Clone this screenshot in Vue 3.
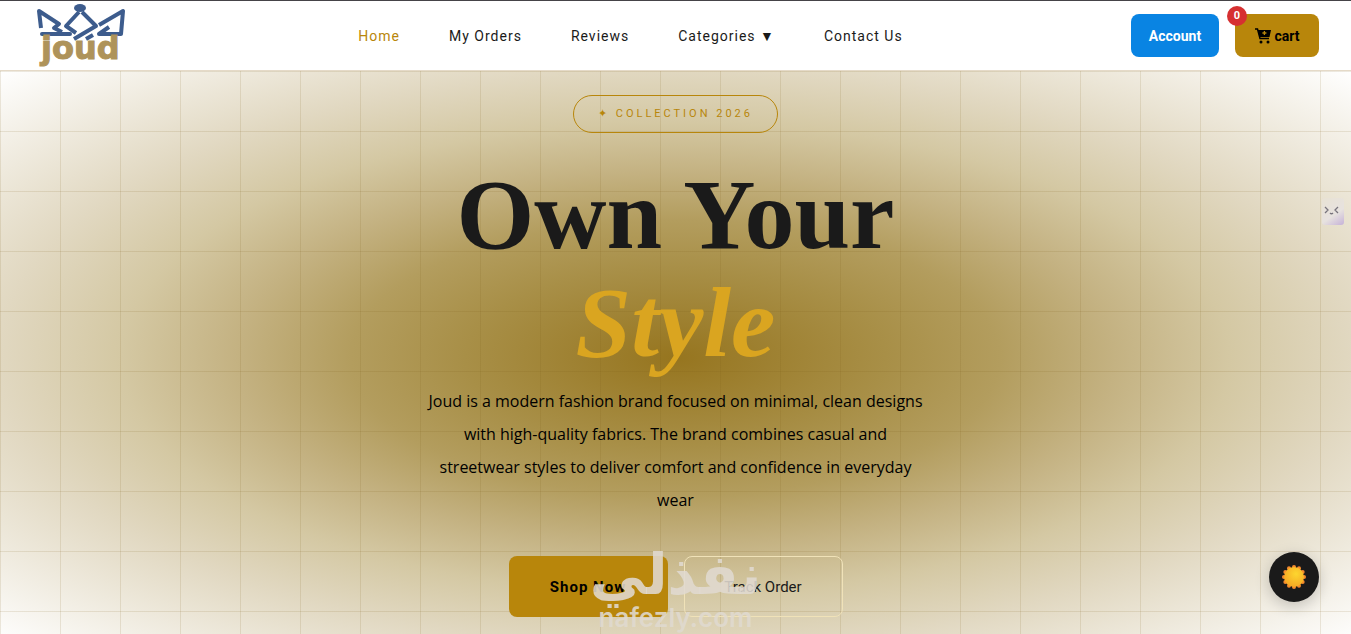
<script setup>
const links = ['Home', 'My Orders', 'Reviews', 'Categories ▼', 'Contact Us']
const petals = Array.from({ length: 12 }, (_, i) => {
  const a = (i * Math.PI) / 6
  return { x: 12 + 10 * Math.sin(a), y: 12 - 10 * Math.cos(a) }
})
</script>

<template>
  <div class="page">
    <header class="bar">
      <a class="logo" href="#" aria-label="Joud">
        <svg width="98" height="68" viewBox="0 0 98 68">
          <g fill="none" stroke="#3d5c8d" stroke-width="4" stroke-linejoin="round">
            <path d="M9 26 7 9l20 13-5 4 8 4" />
            <path d="M10 32h28" stroke-linecap="round" />
            <path d="M47 10 34 24l10 7M50 10l14 14-22 13" />
            <path d="M54 37l7-4M67 23 91 9l-2 23H67l10-7" />
          </g>
          <ellipse cx="48" cy="6" rx="6" ry="4" fill="#3d5c8d" />
          <text class="logo-word" x="9" y="57">joud</text>
        </svg>
      </a>
      <nav class="nav">
        <a v-for="(l, i) in links" :key="l" href="#" :class="{ active: i === 0 }">{{ l }}</a>
      </nav>
      <div class="actions">
        <button class="account" type="button">Account</button>
        <button class="cart" type="button">
          <svg width="16" height="16" viewBox="0 0 16 16" aria-hidden="true">
            <path d="M0 1h2.500L5 10.500h9" fill="none" stroke="#000" stroke-width="1.500" />
            <path d="M2.800 2H16l-1.500 7H4.600z" />
            <path d="M9.400 3v4M7.400 5h4" stroke="#b8860b" stroke-width="1.300" />
            <circle cx="6" cy="14" r="1.500" /><circle cx="13" cy="14" r="1.500" />
          </svg>
          cart
          <span class="badge">0</span>
        </button>
      </div>
    </header>

    <main class="hero">
      <span class="pill">✦ COLLECTION 2026</span>
      <h1>Own Your<em>Style</em></h1>
      <p>
        Joud is a modern fashion brand focused on minimal, clean designs with high-quality fabrics.
        The brand combines casual and streetwear styles to deliver comfort and confidence in everyday wear
      </p>
      <div class="cta">
        <button class="shop" type="button">Shop Now</button>
        <button class="track" type="button">Track Order</button>
        <div class="mark">
          <span class="mark-ar" lang="ar" dir="rtl">نفذلي</span>
          <span class="mark-en">nafezly.com</span>
        </div>
      </div>
    </main>

    <div class="helper">
      <svg width="22" height="27" viewBox="0 0 22 27" aria-hidden="true">
        <path d="M3 9l3 3-3 3M16 9l-3 3 3 3M8 15q1.500 1.500 3 0" fill="none" stroke="#77737c" stroke-width="1.300" />
      </svg>
    </div>
    <button class="theme" type="button" aria-label="Toggle theme">
      <svg width="24" height="24" viewBox="0 0 24 24">
        <defs>
          <radialGradient id="sun" cx="0.600" cy="0.350" r="0.700">
            <stop offset="0" stop-color="#fdd62f" />
            <stop offset="1" stop-color="#f5a623" />
          </radialGradient>
        </defs>
        <circle v-for="(p, i) in petals" :key="i" :cx="p.x" :cy="p.y" r="2" fill="#f58a2c" />
        <circle cx="12" cy="12" r="10" fill="url(#sun)" />
      </svg>
    </button>
  </div>
</template>

<style>
body { margin: 0; }
</style>

<style scoped>
* { box-sizing: border-box; }
.page {
  min-height: 100vh;
  display: flex;
  flex-direction: column;
  font-family: Roboto, "Noto Sans", sans-serif;
  color: #1a1a1a;
}
button { font-family: inherit; cursor: pointer; border: 0; border-radius: 8px; padding: 0; }
a { color: inherit; text-decoration: none; }
.bar {
  display: flex;
  align-items: center;
  justify-content: space-between;
  height: 71px;
  padding: 0 32px;
  background: #fff;
  border-top: 1px solid #454347;
  border-bottom: 1px solid #e5dac8;
}
.logo svg { display: block; }
.logo-word { font: bold 32px "DejaVu Sans", sans-serif; fill: #ae935a; stroke: #ae935a; stroke-width: 1px; }
.nav { display: flex; gap: 49px; font-size: 14px; letter-spacing: 1px; }
.nav .active { color: #b8860b; }
.actions { display: flex; gap: 16px; }
.actions button { height: 43px; font-size: 14px; font-weight: 700; }
.account { width: 88px; background: #0984e3; color: #fff; }
.cart {
  position: relative;
  width: 84px;
  display: flex;
  align-items: center;
  justify-content: center;
  gap: 4px;
  background: #b8860b;
  color: #000;
}
.badge {
  position: absolute;
  top: -8px;
  left: -8px;
  width: 20px;
  height: 20px;
  border-radius: 50%;
  background: #d63031;
  color: #fff;
  font-size: 11px;
  line-height: 20px;
  text-align: center;
}
.hero {
  flex: 1;
  display: flex;
  flex-direction: column;
  align-items: center;
  padding: 24px 24px 17px;
  text-align: center;
  background:
    linear-gradient(90deg, rgba(120, 90, 20, 0.13) 1px, transparent 1px) 0 0 / 60px 60px,
    linear-gradient(rgba(120, 90, 20, 0.13) 1px, transparent 1px) 0 0 / 60px 60px,
    radial-gradient(ellipse at 50% 51%, #96751f 0%, #a88f47 22%, #b39d5e 34%, #c4b282 46%, #d4c8a3 58%, #e1d8c1 71%, #ffffff 100%);
}
.pill {
  padding: 0 24px;
  border: 1px solid #b8860b;
  border-radius: 24px;
  color: #b8860b;
  font-size: 11px;
  line-height: 36px;
  letter-spacing: 3px;
}
h1 {
  margin: 28px 0 0;
  font: bold 100px/108px "Liberation Serif", serif;
}
h1 em { display: block; color: #daa520; }
p {
  max-width: 500px;
  margin: 8px 0 39px;
  color: #000;
  font-family: "Open Sans", "Noto Sans", sans-serif;
  font-size: 16px;
  line-height: 33px;
}
.cta { position: relative; display: flex; gap: 16px; }
.cta button { width: 159px; height: 61px; font-size: 15px; color: #000; }
.cta .shop { background: #b8860b; font-weight: 700; letter-spacing: 1px; }
.cta .track { background: transparent; border: 1px solid #f0e2b8; color: #1a1a1a; }
.mark {
  position: absolute;
  left: 86px;
  top: -10px;
  width: 162px;
  display: flex;
  flex-direction: column;
  align-items: center;
  color: rgba(224, 218, 208, 0.88);
  white-space: nowrap;
  pointer-events: none;
}
.mark-ar { font: bold 56px/58px "DejaVu Sans", sans-serif; }
.mark-en { font: 600 26px/28px Inter, sans-serif; }
.helper {
  position: fixed;
  right: 7px;
  top: 198px;
  width: 22px;
  height: 27px;
  border-radius: 3px;
  background: linear-gradient(145deg, #e8e2d4 0%, #e7e2df 60%, #c5b1d8 100%);
}
.theme {
  position: fixed;
  right: 32px;
  bottom: 32px;
  width: 50px;
  height: 50px;
  display: flex;
  align-items: center;
  justify-content: center;
  border-radius: 50%;
  background: #1a1a1a;
  box-shadow: 0 4px 15px rgba(0, 0, 0, 0.2);
}
</style>
